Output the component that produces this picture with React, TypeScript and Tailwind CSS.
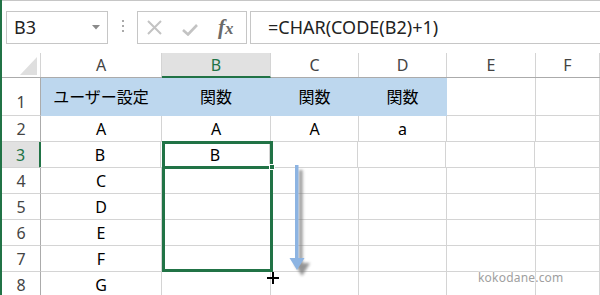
import React from "react";

const cols = ["A", "B", "C", "D", "E", "F"];

const rows: { n: number; cells: string[]; h: string }[] = [
  { n: 1, cells: ["ユーザー設定", "関数", "関数", "関数", "", ""], h: "h-[38px]" },
  { n: 2, cells: ["A", "A", "A", "a", "", ""], h: "h-[26px]" },
  { n: 3, cells: ["B", "B", "", "", "", ""], h: "h-[26px]" },
  { n: 4, cells: ["C", "", "", "", "", ""], h: "h-[26px]" },
  { n: 5, cells: ["D", "", "", "", "", ""], h: "h-[26px]" },
  { n: 6, cells: ["E", "", "", "", "", ""], h: "h-[26px]" },
  { n: 7, cells: ["F", "", "", "", "", ""], h: "h-[26px]" },
  { n: 8, cells: ["G", "", "", "", "", ""], h: "h-[26px]" },
];

const widths = ["w-[121px]", "w-[109px]", "w-[88px]", "w-[88px]", "w-[89px]", "flex-1"];

function Toolbar() {
  return (
    <div className="flex h-[53px] items-start border-t border-[#c6c6c6] pt-[10px]">
      {/* name box */}
      <div className="ml-[4px] flex h-[33px] w-[102px] items-center justify-between border border-[#c6c6c6] pl-[7px] pr-[7px]">
        <span className="text-[18px] text-[#222]">B3</span>
        <svg width="8" height="5" viewBox="0 0 8 5">
          <path d="M0 0 L8 0 L4 4.5 Z" fill="#8a8a8a" />
        </svg>
      </div>
      <div className="ml-[14px] mt-[9px] flex flex-col gap-[3px]">
        <div className="h-[2px] w-[2px] bg-[#aaa]" />
        <div className="h-[2px] w-[2px] bg-[#aaa]" />
        <div className="h-[2px] w-[2px] bg-[#aaa]" />
      </div>
      {/* cancel / enter / fx */}
      <div className="ml-[13px] flex h-[33px] w-[110px] items-center border border-[#c6c6c6]">
        <svg className="ml-[9px]" width="15" height="15" viewBox="0 0 15 15">
          <path d="M1 1 L14 14 M14 1 L1 14" stroke="#c3c3c3" strokeWidth="2" />
        </svg>
        <svg className="ml-[20px] mt-[4px]" width="16" height="12" viewBox="0 0 16 12">
          <path d="M1 6 L6 10.5 L15 1" stroke="#c3c3c3" strokeWidth="2.6" fill="none" />
        </svg>
        <span className="ml-[20px] font-['Liberation_Serif',serif] text-[21px] font-bold italic leading-none text-[#6a6a6a]">
          f<span className="text-[17px]">x</span>
        </span>
      </div>
      {/* formula bar */}
      <div className="ml-[3px] flex h-[33px] flex-1 items-center border-y border-l border-[#c6c6c6] pl-[17px]">
        <span className="text-[18px] text-[#222]">=CHAR(CODE(B2)+1)</span>
      </div>
    </div>
  );
}

function Sheet() {
  return (
    <div className="flex flex-col">
      {/* column header */}
      <div className="flex h-[25px] border-b border-[#ababab]">
        <div className="relative w-[39px] border-r border-[#d4d4d4]">
          <svg className="absolute left-[18px] top-[4px]" width="17" height="18" viewBox="0 0 17 18">
            <path d="M17 0 L17 18 L0 18 Z" fill="#dfdfdf" />
          </svg>
        </div>
        {cols.map((c, i) => (
          <div
            key={c}
            className={`${widths[i]} flex items-center justify-center text-[16px] ${
              c === "B"
                ? "-mb-px border-b-2 border-r border-b-[#217346] border-r-[#d4d4d4] bg-[#e1e1e1] text-[#217346]"
                : "border-r border-[#d4d4d4] text-[#444]"
            }`}
          >
            {c}
          </div>
        ))}
      </div>
      {rows.map((r) => (
        <div key={r.n} className={`flex ${r.h}`}>
          <div
            className={`flex w-[39px] justify-center border-b border-[#d4d4d4] text-[16px] ${
              r.n === 1 ? "items-end pb-[1px]" : "items-center"
            } ${
              r.n === 3
                ? "border-r-2 border-r-[#217346] bg-[#e1e1e1] text-[#217346]"
                : "border-r border-r-[#ababab] text-[#444]"
            }`}
          >
            {r.n}
          </div>
          {r.cells.map((t, i) => {
            const blue = r.n === 1 && i < 4;
            return (
              <div
                key={i}
                className={`${widths[i]} flex items-center justify-center text-[16px] text-black ${
                  blue
                    ? "border-b border-r border-[#bdd7ee] bg-[#bdd7ee]"
                    : "border-b border-r border-[#d4d4d4]"
                } ${r.n === 3 && i === 0 ? "-ml-px" : ""}`}
              >
                {t}
              </div>
            );
          })}
        </div>
      ))}
    </div>
  );
}

export default function App() {
  return (
    <div className="relative h-[295px] w-[600px] overflow-hidden border-l-2 border-[#217346] bg-white font-['Noto_Sans','Noto_Sans_CJK_JP',sans-serif]">
      <Toolbar />
      <Sheet />

      {/* selection B3:B7 */}
      <div className="absolute left-[160px] top-[141px] h-[131px] w-[111px] border-[3px] border-[#217346]" />
      <div className="absolute left-[162px] top-[166px] h-[3px] w-[106px] bg-[#217346]" />
      <div className="absolute left-[267px] top-[164px] h-[6px] w-[6px] border border-white bg-[#217346]" />

      {/* fill arrow */}
      <svg className="absolute left-[280px] top-[160px]" width="35" height="122" viewBox="0 0 35 122">
        <defs>
          <filter id="sh" x="-50%" y="-10%" width="200%" height="130%">
            <feGaussianBlur stdDeviation="1.6" />
          </filter>
        </defs>
        <g filter="url(#sh)" fill="#7a7a7a" opacity="0.8">
          <rect x="17" y="10" width="3.5" height="93" />
          <path d="M12 103 L28 103 L20 116 Z" />
        </g>
        <rect x="13" y="5" width="3.5" height="93" fill="#8db4e2" />
        <path d="M7.5 98 L22.5 98 L15 110 Z" fill="#8db4e2" />
      </svg>

      {/* cursor */}
      <svg className="absolute left-[265px] top-[272px]" width="12" height="12" viewBox="0 0 12 12">
        <path d="M6 0 V12 M0 6 H12" stroke="#000" strokeWidth="2" />
      </svg>

      {/* watermark */}
      <div className="absolute left-[476px] top-[269px] text-[12px] tracking-[0.2px] text-[#a0a0a0] [text-shadow:0_0_2px_#fff,0_0_2px_#fff,0_0_3px_#fff]">
        kokodane.com
      </div>
    </div>
  );
}
